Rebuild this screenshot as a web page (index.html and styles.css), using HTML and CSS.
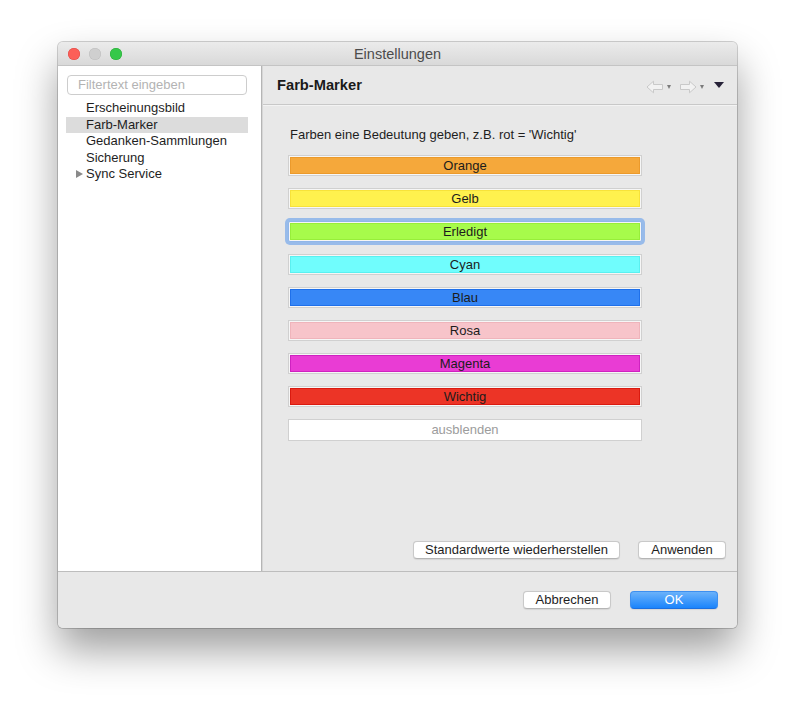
FILE: index.html
```html
<!DOCTYPE html>
<html lang="de">
<head>
<meta charset="utf-8">
<title>Einstellungen</title>
<link rel="stylesheet" href="styles.css">
</head>
<body>
<div class="window">
  <div class="titlebar">
    <div class="lights">
      <span class="light red"></span>
      <span class="light gray"></span>
      <span class="light green"></span>
    </div>
    <div class="title">Einstellungen</div>
    <div></div>
  </div>
  <div class="main">
    <aside class="sidebar">
      <div class="filter">Filtertext eingeben</div>
      <ul class="tree">
        <li class="item">Erscheinungsbild</li>
        <li class="item selected">Farb-Marker</li>
        <li class="item">Gedanken-Sammlungen</li>
        <li class="item">Sicherung</li>
        <li class="item has-children"><span class="twisty"></span>Sync Service</li>
      </ul>
    </aside>
    <section class="pane">
      <header class="pane-head">
        <h1 class="pane-title">Farb-Marker</h1>
        <div class="nav">
          <svg class="arrow" width="18" height="14" viewBox="0 0 18 14"><path d="M1 7 L7.5 1.2 V4.5 H16.5 V9.5 H7.5 V12.8 Z" fill="#f2f2f2" stroke="#c9c9c9" stroke-width="1" stroke-linejoin="round"/></svg>
          <span class="mini-tri"></span>
          <svg class="arrow" width="18" height="14" viewBox="0 0 18 14"><path d="M17 7 L10.5 1.2 V4.5 H1.5 V9.5 H10.5 V12.8 Z" fill="#f2f2f2" stroke="#c9c9c9" stroke-width="1" stroke-linejoin="round"/></svg>
          <span class="mini-tri"></span>
          <span class="menu-tri"></span>
        </div>
      </header>
      <div class="pane-body">
        <p class="desc">Farben eine Bedeutung geben, z.B. rot = 'Wichtig'</p>
        <div class="swatches">
          <div class="swatch"><div class="fill orange">Orange</div></div>
          <div class="swatch"><div class="fill yellow">Gelb</div></div>
          <div class="swatch focused"><div class="fill green">Erledigt</div></div>
          <div class="swatch"><div class="fill cyan">Cyan</div></div>
          <div class="swatch"><div class="fill blue">Blau</div></div>
          <div class="swatch"><div class="fill pink">Rosa</div></div>
          <div class="swatch"><div class="fill magenta">Magenta</div></div>
          <div class="swatch"><div class="fill red">Wichtig</div></div>
          <div class="swatch plain">ausblenden</div>
        </div>
      </div>
      <div class="pane-actions">
        <button class="btn wide">Standardwerte wiederherstellen</button>
        <button class="btn">Anwenden</button>
      </div>
    </section>
  </div>
  <footer class="footer">
    <button class="btn">Abbrechen</button>
    <button class="btn primary">OK</button>
  </footer>
</div>
</body>
</html>
```
FILE: styles.css
```css
* { box-sizing: border-box; }
html, body { margin: 0; padding: 0; }
body {
  background: #ffffff;
  font-family: "Liberation Sans", Arial, sans-serif;
  font-size: 13px;
  color: #1e1e1e;
  width: 800px;
  height: 704px;
  overflow: hidden;
}
.window {
  margin: 42px 0 0 58px;
  width: 679px;
  height: 586px;
  border-radius: 5px;
  overflow: hidden;
  display: flex;
  flex-direction: column;
  background: #e8e8e8;
  box-shadow: 0 0 0 1px rgba(0,0,0,0.18), 0 22px 40px rgba(0,0,0,0.38);
}
.titlebar {
  height: 24px;
  flex: none;
  display: grid;
  grid-template-columns: 1fr auto 1fr;
  align-items: center;
  background: linear-gradient(#ebebeb, #d9d9d9);
  border-bottom: 1px solid #c4c4c4;
}
.lights { display: flex; gap: 9px; padding-left: 10px; }
.light { width: 12px; height: 12px; border-radius: 50%; display: block; }
.light.red { background: #fc5f58; box-shadow: inset 0 0 0 0.5px #df4744; }
.light.gray { background: #cfcfcf; box-shadow: inset 0 0 0 0.5px #bdbdbd; }
.light.green { background: #35c84a; box-shadow: inset 0 0 0 0.5px #27aa35; }
.title { color: #4c4c4c; font-size: 14.5px; }

.main { flex: 1; display: flex; min-height: 0; }
.sidebar {
  width: 204px;
  flex: none;
  background: #ffffff;
  border-right: 1px solid #b5b5b5;
  padding: 9px 0 0 9px;
}
.filter {
  width: 180px;
  height: 20px;
  border: 1px solid #cdcdcd;
  border-radius: 4px;
  color: #b3b3b3;
  padding-left: 10px;
  line-height: 18px;
}
.tree { list-style: none; margin: 5px 0 0 -1px; padding: 0; width: 182px; }
.item { height: 16.5px; line-height: 16.5px; padding-left: 20px; color: #1e1e1e; position: relative; }
.item.selected { background: #dcdcdc; }
.twisty {
  position: absolute;
  left: 10px;
  top: 4px;
  width: 0; height: 0;
  border-left: 7px solid #8a8a8a;
  border-top: 4.5px solid transparent;
  border-bottom: 4.5px solid transparent;
}

.pane {
  flex: 1;
  display: flex;
  flex-direction: column;
  border-left: 1px solid #d6d6d6;
  background: #e8e8e8;
}
.pane-head {
  height: 39px;
  flex: none;
  display: flex;
  align-items: center;
  justify-content: space-between;
  padding: 0 13px 0 13px;
  border-bottom: 1px solid #c8c8c8;
  box-shadow: 0 1px 0 #f3f3f3;
}
.pane-title { margin: 0 0 0 1px; font-size: 14.7px; font-weight: bold; color: #1a1a1a; }
.nav { display: flex; align-items: center; padding-top: 3px; }
.arrow { display: block; }
.mini-tri {
  width: 0; height: 0;
  border-top: 4px solid #7b7b7b;
  border-left: 2.5px solid transparent;
  border-right: 2.5px solid transparent;
  margin: 0 8px 0 3px;
}
.menu-tri {
  width: 0; height: 0;
  border-top: 6px solid #272238;
  border-left: 5px solid transparent;
  border-right: 5px solid transparent;
  margin-left: 2px;
  margin-top: -3px;
}
.pane-body { flex: 1; padding: 22px 0 0 25px; }
.desc { margin: 0 0 12px 2px; line-height: 16px; color: #1e1e1e; }
.swatches { display: flex; flex-direction: column; gap: 12px; width: 354px; }
.swatch {
  height: 21px;
  border: 1px solid #d0d0d0;
  padding: 1px;
  background: #f6f6f6;
}
.swatch.focused {
  border-color: #90b6e9;
  box-shadow: 0 0 0 3px #98bbea;
  border-radius: 2px;
}
.fill {
  height: 100%;
  border: 1px solid;
  text-align: center;
  line-height: 15px;
  color: #1c1c1c;
}
.orange { background: #f5a83b; border-color: #eb9a2c; }
.yellow { background: #fff14e; border-color: #f7e23a; }
.green { background: #a7fb4b; border-color: #97ee3a; }
.cyan { background: #70fdfd; border-color: #5af0f0; }
.blue { background: #3787f6; border-color: #1f70ea; }
.pink { background: #f7c4ca; border-color: #efb4bb; }
.magenta { background: #e93cd4; border-color: #cf22c0; }
.red { background: #ec3426; border-color: #da1a10; }
.swatch.plain {
  background: #ffffff;
  height: 22px;
  padding: 0;
  text-align: center;
  line-height: 20px;
  color: #9c9c9c;
}
.pane-actions {
  flex: none;
  display: flex;
  justify-content: flex-end;
  gap: 18px;
  padding: 0 11px 12px 0;
}
.btn {
  font-family: "Liberation Sans", Arial, sans-serif;
  font-size: 13px;
  color: #1e1e1e;
  height: 18px;
  width: 88px;
  padding: 0;
  line-height: 16px;
  background: #ffffff;
  border: 1px solid #c9c9c9;
  border-bottom-color: #b5b5b5;
  border-radius: 4px;
  box-shadow: 0 0.5px 1px rgba(0,0,0,0.08);
}
.btn.wide { width: 207px; }
.btn.primary {
  background: linear-gradient(#6bb2fa, #1a84fc);
  border-color: #3d8ff0;
  border-bottom-color: #1b6fe0;
  color: #ffffff;
}
.footer {
  height: 57px;
  flex: none;
  border-top: 1px solid #bdbdbd;
  display: flex;
  justify-content: flex-end;
  gap: 19px;
  padding: 19px 19px 0 0;
  background: #e8e8e8;
}
```
